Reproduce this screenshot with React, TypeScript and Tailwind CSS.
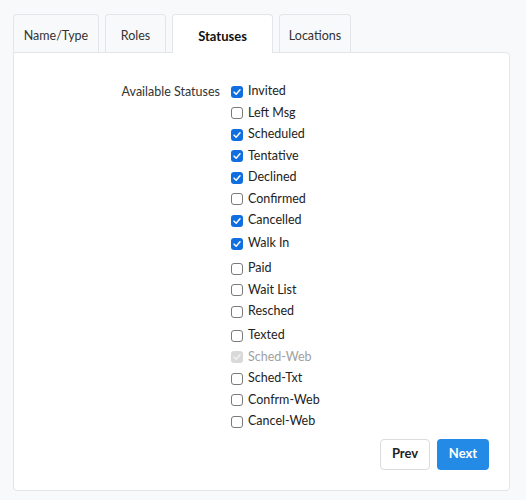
import React from "react"

const tabs = [
  { label: "Name/Type", w: "w-[86px]" },
  { label: "Roles", w: "w-[61px]" },
  { label: "Statuses", w: "w-[101px]" },
  { label: "Locations", w: "w-[72px]" },
]

type Status = { label: string; checked: boolean; disabled?: boolean; extra?: string }

const statuses: Status[] = [
  { label: "Invited", checked: true },
  { label: "Left Msg", checked: false },
  { label: "Scheduled", checked: true },
  { label: "Tentative", checked: true },
  { label: "Declined", checked: true },
  { label: "Confirmed", checked: false },
  { label: "Cancelled", checked: true },
  { label: "Walk In", checked: true, extra: "mt-[1.5px]" },
  { label: "Paid", checked: false, extra: "mt-[3.5px]" },
  { label: "Wait List", checked: false },
  { label: "Resched", checked: false },
  { label: "Texted", checked: false, extra: "mt-[2.5px]" },
  { label: "Sched-Web", checked: true, disabled: true },
  { label: "Sched-Txt", checked: false },
  { label: "Confrm-Web", checked: false },
  { label: "Cancel-Web", checked: false },
]

function Box({ checked, disabled }: { checked: boolean; disabled?: boolean }) {
  if (disabled) {
    return (
      <span className="flex h-[12px] w-[12px] items-center justify-center rounded-[3px] bg-[#d9d9d9]">
        <svg viewBox="0 0 12 12" className="h-[10px] w-[10px]">
          <path d="M2.5 6.2 5 8.6 9.6 3.4" fill="none" stroke="#f2f2f2" strokeWidth="1.8" strokeLinecap="round" strokeLinejoin="round" />
        </svg>
      </span>
    )
  }
  if (checked) {
    return (
      <span className="flex h-[12px] w-[12px] items-center justify-center rounded-[3px] bg-[#0f6fe0]">
        <svg viewBox="0 0 12 12" className="h-[10px] w-[10px]">
          <path d="M2.5 6.2 5 8.6 9.6 3.4" fill="none" stroke="#fff" strokeWidth="1.8" strokeLinecap="round" strokeLinejoin="round" />
        </svg>
      </span>
    )
  }
  return <span className="h-[12px] w-[12px] rounded-[3px] border border-[#7a7a7a] bg-white" />
}

export default function App() {
  return (
    <div className="min-h-[500px] bg-[#f8f9fa] px-[13px] pt-[14px] text-[12.5px] text-[#222] [font-family:Lato,sans-serif]">
      <div className="flex gap-[6px]">
        {tabs.map((t) => {
          const active = t.label === "Statuses"
          return (
            <div
              key={t.label}
              className={
                active
                  ? `relative -mb-px flex h-[39px] ${t.w} items-center justify-center rounded-t-[4px] border border-b-0 border-[#e3e5e8] bg-white pt-[5px] text-[13px] font-bold text-[#111]`
                  : `flex h-[38px] ${t.w} items-center justify-center rounded-t-[4px] border border-b-0 border-[#e3e5e8] bg-[#f8f9fa] pt-[5px] text-[12.5px] text-[#333]`
              }
            >
              {t.label}
            </div>
          )
        })}
      </div>
      <div className="w-[497px] rounded-b-[4px] rounded-tr-[4px] border border-[#e3e5e8] bg-white px-[20px] pb-[20px] pt-[28px]">
        <div className="flex">
          <div className="w-[197px] pr-[11px] text-right leading-[21.5px] text-[#333]">Available Statuses</div>
          <div className="flex flex-col">
            {statuses.map((s) => (
              <label key={s.label} className={`flex h-[21.5px] items-center gap-[5px] ${s.extra ?? ""}`}>
                <Box checked={s.checked} disabled={s.disabled} />
                <span className={s.disabled ? "text-[#a0a0a0]" : "text-[#222]"}>{s.label}</span>
              </label>
            ))}
          </div>
        </div>
        <div className="mt-[6px] flex justify-end gap-[7px]">
          <button className="h-[31px] w-[50px] rounded-[4px] border border-[#dcdcdc] bg-white text-[13px] font-bold text-[#222]">
            Prev
          </button>
          <button className="h-[31px] w-[52px] rounded-[4px] bg-[#238be6] text-[13px] font-bold text-white">Next</button>
        </div>
      </div>
    </div>
  )
}
